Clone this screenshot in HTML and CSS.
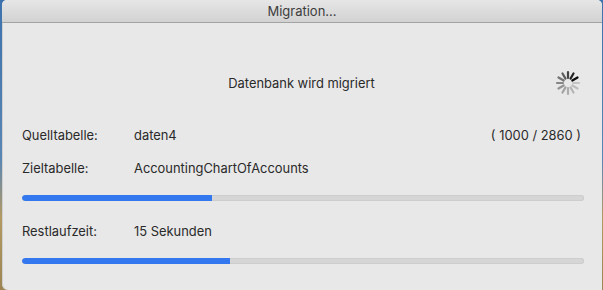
FILE: index.html
```html
<!DOCTYPE html>
<html>
  <head>
    <title>Migration...</title>
    <link rel="stylesheet" href="styles.css">
  </head>

  <body>
    <div class="window">
      <div class="titlebar">Migration...</div>
      <main class="content">
        <div class="header">
          <p class="status">Datenbank wird migriert</p>
          <svg class="spinner" width="26" height="26" viewBox="-13 -13 26 26">
            <g stroke="#000" stroke-width="2.2" stroke-linecap="round">
              <line x1="0" y1="-5" x2="0" y2="-11" transform="rotate(30)" opacity="0.85" />
              <line x1="0" y1="-5" x2="0" y2="-11" transform="rotate(0)" opacity="0.7" />
              <line x1="0" y1="-5" x2="0" y2="-11" transform="rotate(-30)" opacity="0.6" />
              <line x1="0" y1="-5" x2="0" y2="-11" transform="rotate(-60)" opacity="0.5" />
              <line x1="0" y1="-5" x2="0" y2="-11" transform="rotate(-90)" opacity="0.42" />
              <line x1="0" y1="-5" x2="0" y2="-11" transform="rotate(-120)" opacity="0.36" />
              <line x1="0" y1="-5" x2="0" y2="-11" transform="rotate(-150)" opacity="0.3" />
              <line x1="0" y1="-5" x2="0" y2="-11" transform="rotate(180)" opacity="0.26" />
              <line x1="0" y1="-5" x2="0" y2="-11" transform="rotate(150)" opacity="0.22" />
              <line x1="0" y1="-5" x2="0" y2="-11" transform="rotate(120)" opacity="0.18" />
              <line x1="0" y1="-5" x2="0" y2="-11" transform="rotate(90)" opacity="0.15" />
              <line x1="0" y1="-5" x2="0" y2="-11" transform="rotate(60)" opacity="0.95" />
            </g>
          </svg>
        </div>

        <div class="row first">
          <span class="label">Quelltabelle:</span>
          <span class="value">daten4</span>
          <span class="count">( 1000 / 2860 )</span>
        </div>
        <div class="row">
          <span class="label">Zieltabelle:</span>
          <span class="value">AccountingChartOfAccounts</span>
        </div>
        <div class="bar"><div class="fill" style="width: 33.8%"></div></div>

        <div class="row time">
          <span class="label">Restlaufzeit:</span>
          <span class="value">15 Sekunden</span>
        </div>
        <div class="bar"><div class="fill" style="width: 37%"></div></div>
      </main>
    </div>
  </body>
</html>
```

FILE: styles.css
```css
html,
body {
  height: 100%;
}
body {
  margin: 0;
  background: linear-gradient(#3d72ad 0%, #5a86b4 55%, #b39a63 75%, #9c8552 100%);
  font-family: Inter, "Liberation Sans", sans-serif;
  font-size: 12.9px;
  color: #2a2a2a;
}
.window {
  margin: 0 1px 0 2px;
  height: 100%;
  background: #e8e8e8;
  border-radius: 5px 5px 0 6px;
  box-shadow: inset 1px 0 0 #d0d0d0;
  box-sizing: border-box;
  overflow: hidden;
}
.titlebar {
  height: 22px;
  line-height: 22px;
  text-align: center;
  font-size: 13px;
  color: #3c3c3c;
  background: linear-gradient(#e6e6e6, #d2d2d2);
  border-bottom: 1px solid #a3a3a3;
}
.content {
  padding: 40px 21px 0 20px;
}
.header {
  position: relative;
  height: 40px;
  display: flex;
  align-items: center;
  justify-content: center;
}
.status {
  margin: 0;
}
.spinner {
  position: absolute;
  right: 0;
  top: 7px;
}
.row {
  display: flex;
  height: 16px;
  line-height: 16px;
  margin-top: 17px;
}
.row.first {
  margin-top: 25px;
}
.row.time {
  margin-top: 23px;
}
.label {
  width: 112px;
}
.value {
  flex: 1;
}
.bar {
  margin: 18px -3px 0 0;
  height: 6px;
  border-radius: 3px;
  background: #d6d6d6;
  box-shadow: inset 0 0 0 1px #cdcdcd;
  overflow: hidden;
}
.fill {
  height: 100%;
  background: #3478f0;
  border-radius: 3px 0 0 3px;
}
```
